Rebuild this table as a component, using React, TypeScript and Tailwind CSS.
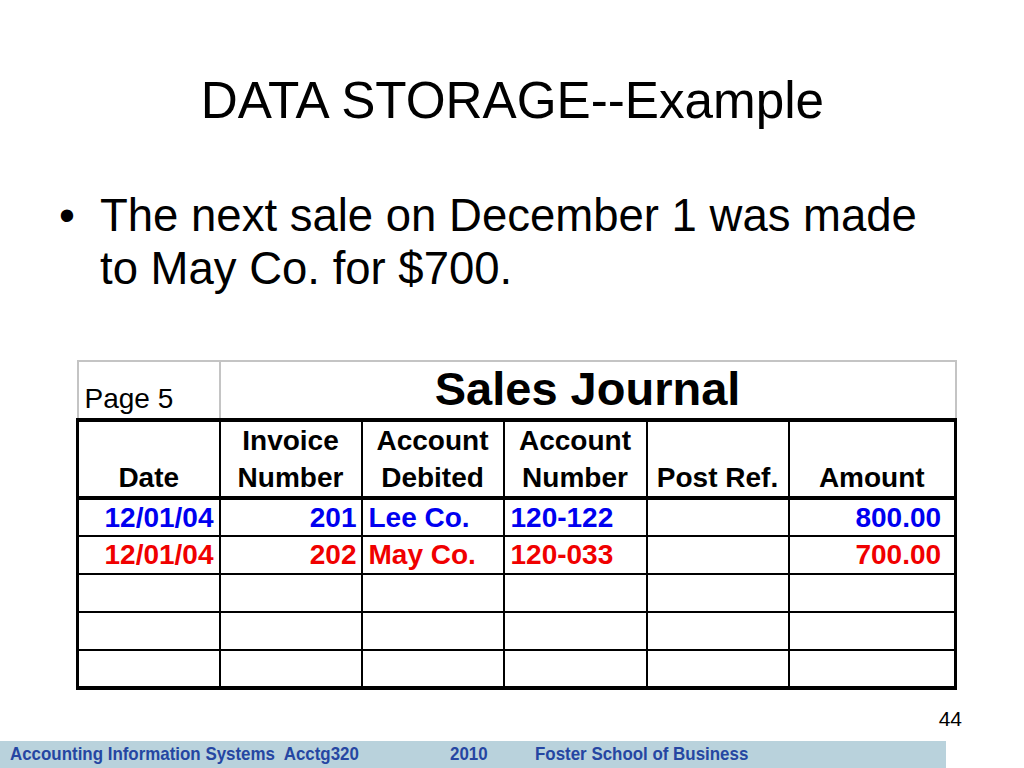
import React from "react";

const rows = [
  { date: "12/01/04", invoice: "201", account: "Lee Co.", number: "120-122", amount: "800.00", color: "text-[#0000f0]" },
  { date: "12/01/04", invoice: "202", account: "May Co.", number: "120-033", amount: "700.00", color: "text-[#f00000]" },
  { date: "", invoice: "", account: "", number: "", amount: "", color: "" },
  { date: "", invoice: "", account: "", number: "", amount: "", color: "" },
  { date: "", invoice: "", account: "", number: "", amount: "", color: "" },
];

const cell = "border-2 border-black p-0";

export default function App() {
  return (
    <div
      className="relative flex h-[768px] w-[1024px] flex-col bg-white text-black"
      style={{ fontFamily: '"Liberation Sans", Arial, sans-serif' }}
    >
      {/* title */}
      <h1 className="mt-[74px] h-[52px] text-center text-[52px] leading-none">
        <span className="inline-block scale-x-[0.985]">DATA STORAGE--Example</span>
      </h1>

      {/* bullet */}
      <div className="mt-[63px] flex pl-[59px] pr-[30px] text-[45.5px] leading-[53px]">
        <span className="w-[41px] shrink-0">•</span>
        <p>
          The next sale on December 1 was made
          <br />
          to May Co. for $700.
        </p>
      </div>

      {/* sales journal */}
      <div className="ml-[76px] mt-[65px] w-[878px]">
        <table className="w-[878px] table-fixed border-collapse">
          <colgroup>
            <col className="w-[142px]" />
            <col className="w-[142px]" />
            <col className="w-[142px]" />
            <col className="w-[143px]" />
            <col className="w-[142px]" />
            <col className="w-[167px]" />
          </colgroup>
          <tbody>
            <tr className="h-[59px]">
              <td className="border-2 border-[#c4c4c4] px-[6px] pb-[4px] align-bottom text-[28px] leading-[30px]">
                Page 5
              </td>
              <td
                colSpan={5}
                className="border-2 border-[#c4c4c4] pb-[4px] text-center align-bottom text-[47px] font-bold leading-[50px]"
              >
                Sales Journal
              </td>
            </tr>
            <tr className="h-[78px] text-center text-[28px] font-bold leading-[37px]">
              <td className={`${cell} border-t-4 border-b-4 border-l-[3px] align-bottom`}>Date</td>
              <td className={`${cell} border-t-4 border-b-4 align-bottom`}>
                Invoice
                <br />
                Number
              </td>
              <td className={`${cell} border-t-4 border-b-4 align-bottom`}>
                Account
                <br />
                Debited
              </td>
              <td className={`${cell} border-t-4 border-b-4 align-bottom`}>
                Account
                <br />
                Number
              </td>
              <td className={`${cell} border-t-4 border-b-4 align-bottom`}>Post Ref.</td>
              <td className={`${cell} border-t-4 border-b-4 border-r-[3px] align-bottom`}>Amount</td>
            </tr>
            {rows.map((r, i) => (
              <tr
                key={i}
                className={`h-[38px] text-[28px] font-bold leading-[32px] ${r.color}`}
              >
                <td className={`${cell} border-l-[3px] pr-[5px] text-right ${i === 4 ? "border-b-4" : ""}`}>
                  {r.date}
                </td>
                <td className={`${cell} pr-[4px] text-right ${i === 4 ? "border-b-4" : ""}`}>{r.invoice}</td>
                <td className={`${cell} pl-[6px] text-left ${i === 4 ? "border-b-4" : ""}`}>{r.account}</td>
                <td className={`${cell} pl-[6px] text-left ${i === 4 ? "border-b-4" : ""}`}>{r.number}</td>
                <td className={`${cell} ${i === 4 ? "border-b-4" : ""}`}></td>
                <td className={`${cell} border-r-[3px] pr-[13px] text-right ${i === 4 ? "border-b-4" : ""}`}>
                  {r.amount}
                </td>
              </tr>
            ))}
          </tbody>
        </table>
      </div>

      {/* slide number */}
      <div className="mt-auto flex justify-end pr-[62px] text-[21px] leading-none">
        <span>44</span>
      </div>

      {/* footer */}
      <div className="mt-[12px] flex h-[27px] w-[946px] items-center bg-[#b9d2dc] pl-[10px] text-[19px] font-bold text-[#2546a2]">
        <span className="w-[440px] whitespace-pre">
          <span className="inline-block origin-left scale-x-[0.89]">Accounting Information Systems  Acctg320</span>
        </span>
        <span className="w-[85px]">
          <span className="inline-block origin-left scale-x-[0.89]">2010</span>
        </span>
        <span>
          <span className="inline-block origin-left scale-x-[0.89]">Foster School of Business</span>
        </span>
      </div>
    </div>
  );
}
